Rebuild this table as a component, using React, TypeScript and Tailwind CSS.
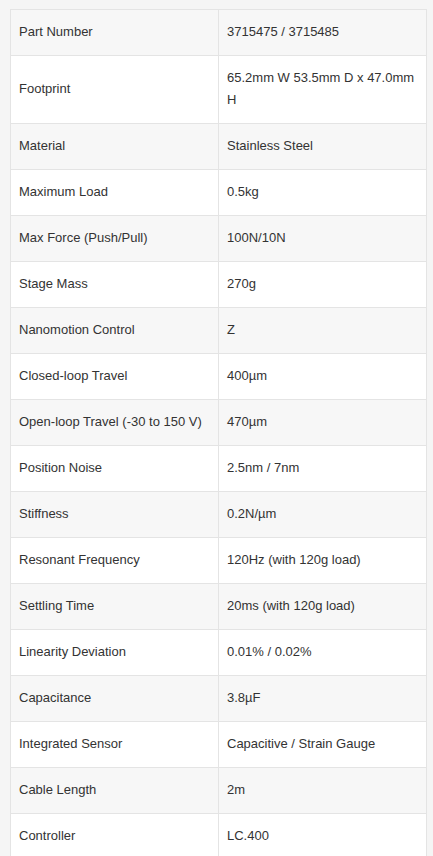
const specs: [string, string][] = [
  ["Part Number", "3715475 / 3715485"],
  ["Footprint", "65.2mm W 53.5mm D x 47.0mm H"],
  ["Material", "Stainless Steel"],
  ["Maximum Load", "0.5kg"],
  ["Max Force (Push/Pull)", "100N/10N"],
  ["Stage Mass", "270g"],
  ["Nanomotion Control", "Z"],
  ["Closed-loop Travel", "400µm"],
  ["Open-loop Travel (-30 to 150 V)", "470µm"],
  ["Position Noise", "2.5nm / 7nm"],
  ["Stiffness", "0.2N/µm"],
  ["Resonant Frequency", "120Hz (with 120g load)"],
  ["Settling Time", "20ms (with 120g load)"],
  ["Linearity Deviation", "0.01% / 0.02%"],
  ["Capacitance", "3.8µF"],
  ["Integrated Sensor", "Capacitive / Strain Gauge"],
  ["Cable Length", "2m"],
  ["Controller", "LC.400"],
]

export default function App() {
  return (
    <div className="min-h-screen bg-[#f5f5f5] pt-[9px] pl-[10px] font-['Liberation_Sans',Arial,sans-serif] text-[13px] text-[#333]">
      <table className="w-[417px] table-fixed border-collapse border border-[#e4e4e4]">
        <tbody>
          {specs.map(([label, value], i) => (
            <tr key={label} className={i % 2 === 0 ? "bg-[#f7f7f7]" : "bg-white"}>
              <td className="w-1/2 border border-[#e4e4e4] px-2 pt-[11px] pb-[12px] align-middle leading-[22px]">
                {label}
              </td>
              <td className="w-1/2 border border-[#e4e4e4] px-2 pt-[11px] pb-[12px] align-middle leading-[22px]">
                {value}
              </td>
            </tr>
          ))}
        </tbody>
      </table>
    </div>
  )
}
